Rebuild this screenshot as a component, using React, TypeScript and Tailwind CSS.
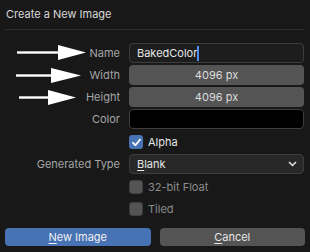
import React from "react";

function Arrow({ top, left, shaft, head, h }: { top: number; left: number; shaft: number; head: number; h: number }) {
  const w = shaft + head;
  return (
    <svg className="absolute" style={{ top, left }} width={w} height={h} viewBox={`0 0 ${w} ${h}`}>
      <rect x={0} y={h / 2 - 1.2} width={shaft + 2} height={2.4} fill="#fff" />
      <polygon points={`${shaft},0 ${w},${h / 2} ${shaft},${h}`} fill="#fff" />
    </svg>
  );
}

function Check({ checked }: { checked?: boolean }) {
  return checked ? (
    <div className="w-[14px] h-[14px] rounded-[3px] bg-[#4772b3] flex items-center justify-center">
      <svg width="11" height="11" viewBox="0 0 11 11">
        <path d="M2 5.8 L4.4 8.2 L9 2.6" stroke="#fff" strokeWidth="1.8" fill="none" strokeLinecap="round" strokeLinejoin="round" />
      </svg>
    </div>
  ) : (
    <div className="w-[14px] h-[14px] rounded-[3px] bg-[#545454] border border-[#3d3d3d]" />
  );
}

export default function App() {
  return (
    <div
      className="relative w-[310px] h-[252px] bg-[#181818] text-[11px] overflow-hidden"
      style={{ fontFamily: "Inter, 'DejaVu Sans', sans-serif" }}
    >
      <div className="h-[29px] pl-[6px] flex items-center text-[#d8d8d8]">Create a New Image</div>
      <div className="mx-[5px] h-[1px] bg-[#2d2d2d]" />
      <div className="mt-[13px] grid grid-cols-[120px_175px] gap-x-[9px] gap-y-[2px] items-center">
        <div className="text-right text-[#a6a6a6] h-[20px] leading-[20px]">Name</div>
        <div className="h-[20px] rounded-[4px] bg-[#1d1d1d] border border-[#3d3d3d] flex items-center pl-[7px] text-[#e6e6e6]">
          BakedColor<span className="inline-block w-[2px] h-[15px] bg-[#4f8ef7] ml-[0px]" />
        </div>
        <div className="text-right text-[#a6a6a6] h-[20px] leading-[20px]">Width</div>
        <div className="h-[20px] rounded-[4px] bg-[#545454] flex items-center justify-center text-[#dcdcdc]">4096 px</div>
        <div className="text-right text-[#a6a6a6] h-[20px] leading-[20px]">Height</div>
        <div className="h-[20px] rounded-[4px] bg-[#545454] flex items-center justify-center text-[#dcdcdc]">4096 px</div>
        <div className="text-right text-[#a6a6a6] h-[20px] leading-[20px]">Color</div>
        <div className="h-[20px] rounded-[4px] bg-black border border-[#3d3d3d]" />
      </div>
      <div className="mt-[5px] grid grid-cols-[120px_175px] gap-x-[9px] items-center">
        <div />
        <div className="h-[16px] flex items-center gap-[5px] text-[#e6e6e6]">
          <Check checked />
          <span>Alpha</span>
        </div>
      </div>
      <div className="mt-[4px] grid grid-cols-[120px_175px] gap-x-[9px] items-center">
        <div className="text-right text-[#a6a6a6]">Generated Type</div>
        <div className="h-[20px] rounded-[4px] bg-[#282828] border border-[#3d3d3d] flex items-center pl-[7px] pr-[6px] text-[#e6e6e6]">
          <span className="flex-1">
            <span className="underline underline-offset-2">B</span>lank
          </span>
          <svg width="9" height="6" viewBox="0 0 9 6">
            <path d="M1 1 L4.5 4.5 L8 1" stroke="#e6e6e6" strokeWidth="1.5" fill="none" />
          </svg>
        </div>
      </div>
      <div className="mt-[5px] grid grid-cols-[120px_175px] gap-x-[9px] items-center">
        <div />
        <div className="h-[16px] flex items-center gap-[5px] text-[#8c8c8c]">
          <Check />
          <span>32-bit Float</span>
        </div>
      </div>
      <div className="mt-[6px] grid grid-cols-[120px_175px] gap-x-[9px] items-center">
        <div />
        <div className="h-[16px] flex items-center gap-[5px] text-[#8c8c8c]">
          <Check />
          <span>Tiled</span>
        </div>
      </div>
      <div className="mt-[11px] px-[5px] flex gap-[9px]">
        <div className="flex-1 h-[18px] rounded-[4px] bg-[#4772b3] flex items-center justify-center text-[#f0f0f0]">
          <span><span className="underline underline-offset-2">N</span>ew Image</span>
        </div>
        <div className="flex-1 h-[18px] rounded-[4px] bg-[#545454] flex items-center justify-center text-[#e6e6e6]">
          <span><span className="underline underline-offset-2">C</span>ancel</span>
        </div>
      </div>
      <Arrow top={45} left={17} shaft={41} head={28} h={15} />
      <Arrow top={68} left={16} shaft={35} head={30} h={15} />
      <Arrow top={90} left={19} shaft={29} head={28} h={15} />
    </div>
  );
}
